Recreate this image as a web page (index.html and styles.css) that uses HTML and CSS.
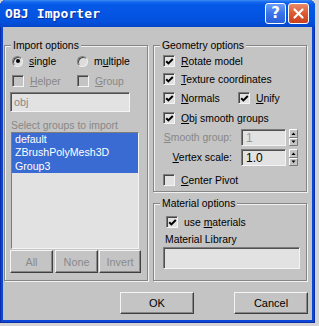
FILE: index.html
```html
<!DOCTYPE html>
<html>
<head>
<meta charset="utf-8">
<link rel="stylesheet" href="styles.css">
</head>
<body>
<div class="window">
  <div class="titlebar">
    <span class="title">OBJ Importer</span>
    <div class="tbtns">
      <span class="tb help">?</span>
      <span class="tb close"><svg width="13" height="13" viewBox="0 0 13 13"><path d="M2.5 2.5L10.5 10.5M10.5 2.5L2.5 10.5" stroke="#fff" stroke-width="2.2" stroke-linecap="round"/></svg></span>
    </div>
  </div>
  <div class="client">
    <div class="groups">
      <fieldset class="grp import">
        <legend>Import options</legend>
        <div class="pair radios">
          <label class="opt"><span class="radio on"></span><span><u>s</u>ingle</span></label>
          <label class="opt"><span class="radio"></span><span>m<u>u</u>ltiple</span></label>
        </div>
        <div class="pair checks dis">
          <label class="opt"><span class="cb"></span><span><u>H</u>elper</span></label>
          <label class="opt"><span class="cb"></span><span><u>G</u>roup</span></label>
        </div>
        <div class="field objfield">obj</div>
        <div class="hint">Select groups to import</div>
        <div class="list">
          <div class="item sel">default</div>
          <div class="item sel">ZBrushPolyMesh3D</div>
          <div class="item sel">Group3</div>
        </div>
        <div class="btnrow">
          <span class="btn dis b-all">All</span>
          <span class="btn dis b-none">None</span>
          <span class="btn dis b-inv">Invert</span>
        </div>
      </fieldset>
      <div class="rightcol">
        <fieldset class="grp geom">
          <legend>Geometry options</legend>
          <label class="opt r1"><span class="cb on"><svg width="9" height="9" viewBox="0 0 9 9"><path d="M1.2 4.2L3.4 6.4L7.8 2" stroke="#000" stroke-width="2" fill="none"/></svg></span><span><u>R</u>otate model</span></label>
          <label class="opt r2"><span class="cb on"><svg width="9" height="9" viewBox="0 0 9 9"><path d="M1.2 4.2L3.4 6.4L7.8 2" stroke="#000" stroke-width="2" fill="none"/></svg></span><span><u>T</u>exture coordinates</span></label>
          <div class="pair2 r3">
            <label class="opt"><span class="cb on"><svg width="9" height="9" viewBox="0 0 9 9"><path d="M1.2 4.2L3.4 6.4L7.8 2" stroke="#000" stroke-width="2" fill="none"/></svg></span><span><u>N</u>ormals</span></label>
            <label class="opt"><span class="cb on"><svg width="9" height="9" viewBox="0 0 9 9"><path d="M1.2 4.2L3.4 6.4L7.8 2" stroke="#000" stroke-width="2" fill="none"/></svg></span><span><u>U</u>nify</span></label>
          </div>
          <label class="opt r4"><span class="cb on"><svg width="9" height="9" viewBox="0 0 9 9"><path d="M1.2 4.2L3.4 6.4L7.8 2" stroke="#000" stroke-width="2" fill="none"/></svg></span><span><u>O</u>bj smooth groups</span></label>
          <div class="spinrow s1 dis">
            <span class="slabel"><u>S</u>mooth group:</span>
            <span class="field num">1</span>
            <svg class="spin" width="9" height="17" viewBox="0 0 9 17"><rect x="0" y="0" width="9" height="17" fill="#c4c4c4"/><path d="M0.5 8V0.5H8.5" stroke="#fff" fill="none"/><path d="M0.5 8.5H8.5V0.5" stroke="#7a7a7a" fill="none"/><path d="M0.5 16V9.5H8.5" stroke="#fff" fill="none"/><path d="M0.5 16.5H8.5V9.5" stroke="#7a7a7a" fill="none"/><path d="M2.5 6H6.5L4.5 3.5Z" fill="#000"/><path d="M2.5 11.5H6.5L4.5 14Z" fill="#000"/></svg>
          </div>
          <div class="spinrow s2">
            <span class="slabel"><u>V</u>ertex scale:</span>
            <span class="field num">1.0</span>
            <svg class="spin" width="9" height="17" viewBox="0 0 9 17"><rect x="0" y="0" width="9" height="17" fill="#c4c4c4"/><path d="M0.5 8V0.5H8.5" stroke="#fff" fill="none"/><path d="M0.5 8.5H8.5V0.5" stroke="#7a7a7a" fill="none"/><path d="M0.5 16V9.5H8.5" stroke="#fff" fill="none"/><path d="M0.5 16.5H8.5V9.5" stroke="#7a7a7a" fill="none"/><path d="M2.5 6H6.5L4.5 3.5Z" fill="#000"/><path d="M2.5 11.5H6.5L4.5 14Z" fill="#000"/></svg>
          </div>
          <label class="opt r5"><span class="cb"></span><span><u>C</u>enter Pivot</span></label>
        </fieldset>
        <fieldset class="grp mat">
          <legend>Material options</legend>
          <label class="opt m1"><span class="cb on"><svg width="9" height="9" viewBox="0 0 9 9"><path d="M1.2 4.2L3.4 6.4L7.8 2" stroke="#000" stroke-width="2" fill="none"/></svg></span><span>use <u>m</u>aterials</span></label>
          <div class="mlabel">Material Library</div>
          <div class="field libfield"></div>
        </fieldset>
      </div>
    </div>
    <div class="footer">
      <span class="btn big">OK</span>
      <span class="btn big">Cancel</span>
    </div>
  </div>
</div>
</body>
</html>
```

FILE: styles.css
```css
* { box-sizing: border-box; }

body {
  margin: 0;
  background: #d4d4d4;
  font-family: "Liberation Sans", Arial, sans-serif;
  font-size: 10.4px;
  color: #000;
}

.window {
  width: 315px;
  height: 323px;
  display: flex;
  flex-direction: column;
  background: #0b46d6;
  box-shadow: inset 1px 0 #0a2fa8, inset -1px 0 #0a2fa8, inset 0 -1px #0a2fa8;
  border-radius: 6px 6px 0 0;
}

.titlebar {
  height: 27px;
  flex: none;
  display: flex;
  align-items: center;
  justify-content: space-between;
  padding: 0 6px 0 5px;
  border-radius: 6px 6px 0 0;
  background: linear-gradient(to bottom, #3f8cf5 0, #1468ee 2px, #0558e6 5px, #0454e2 16px, #0350dc 22px, #0345c9 27px);
}

.title {
  font-family: "DejaVu Sans Mono", "Liberation Mono", monospace;
  font-weight: bold;
  font-size: 13px;
  color: #fff;
  letter-spacing: 0.1px;
  text-shadow: 1px 1px #0a2f9a;
  margin-top: -1px;
}

.tbtns {
  display: flex;
  gap: 2px;
  margin-top: -1px;
}

.tb {
  width: 21px;
  height: 21px;
  border: 1px solid #fff;
  border-radius: 3px;
  display: flex;
  align-items: center;
  justify-content: center;
}

.help {
  background: linear-gradient(to bottom, #6a9cf6, #3a73e8 50%, #2b60d8);
  color: #fff;
  font-family: "DejaVu Sans", sans-serif;
  font-weight: bold;
  font-size: 15px;
}

.close {
  background: linear-gradient(to bottom, #ea8a68, #dc5a33 50%, #c9401c);
}

.client {
  flex: 1;
  margin: 0 3px 3px;
  background: #c4c4c4;
  padding: 12px 0 0 1px;
}

.groups {
  display: grid;
  grid-template-columns: 144px 154px;
  column-gap: 5px;
}

.rightcol {
  display: flex;
  flex-direction: column;
  gap: 5px;
}

.grp {
  margin: 0;
  border: 1px solid #858585;
  box-shadow: inset 1px 1px #f2f2f2, 1px 1px #f2f2f2;
  padding: 0 0 0 6px;
  min-width: 0;
}

.grp legend {
  padding: 0 2px;
  line-height: 13px;
  background: #c4c4c4;
}

.import { height: 242px; padding-bottom: 7px; }
.geom { height: 153px; }
.mat { height: 84px; }

.opt {
  display: flex;
  align-items: center;
  gap: 6px;
  white-space: nowrap;
}

.dis { color: #878787; }

.pair {
  display: grid;
  grid-template-columns: 65px auto;
  margin-left: 1px;
  height: 14px;
}

.radios { margin-top: 2px; }
.checks { margin-top: 6px; }

.radio {
  width: 11px;
  height: 11px;
  border-radius: 50%;
  border: 1px solid;
  border-color: #7c7c7c #f0f0f0 #f0f0f0 #7c7c7c;
  background: #dcdcdc;
  box-shadow: inset 1px 1px #4a4a4a;
  display: flex;
  align-items: center;
  justify-content: center;
  flex: none;
}

.radio.on::after {
  content: "";
  width: 4px;
  height: 4px;
  border-radius: 50%;
  background: #000;
}

.cb {
  width: 12px;
  height: 12px;
  flex: none;
  border: 1px solid;
  border-color: #7c7c7c #f4f4f4 #f4f4f4 #7c7c7c;
  box-shadow: inset 1px 1px #454545;
  background: #e2e2e2;
  display: flex;
  align-items: center;
  justify-content: center;
  padding: 1px 0 0 1px;
}

.dis .cb { background: #c4c4c4; }

.field {
  border: 1px solid;
  border-color: #7c7c7c #f4f4f4 #f4f4f4 #7c7c7c;
  box-shadow: inset 1px 1px #505050;
  background: #e2e2e2;
}

.objfield {
  width: 120px;
  height: 20px;
  margin: 4px 0 0 -1px;
  color: #888;
  padding: 3px 0 0 3px;
  font-size: 10.8px;
}

.hint {
  margin-top: 7px;
  line-height: 13px;
  color: #888;
}

.list {
  width: 128px;
  height: 117px;
  border: 1px solid;
  border-color: #7c7c7c #f4f4f4 #f4f4f4 #7c7c7c;
  background: #e2e2e2;
  padding-top: 0;
}

.item {
  height: 13.3px;
  line-height: 13px;
  padding-left: 3px;
  font-size: 10.6px;
}

.item.sel {
  background: #3a6bd2;
  color: #fff;
}

.btnrow {
  display: flex;
  gap: 1px;
  margin: 1px 0 0 -1px;
}

.btn {
  display: flex;
  align-items: center;
  justify-content: center;
  height: 23px;
  border: 1px solid;
  border-color: #f4f4f4 #404040 #404040 #f4f4f4;
  box-shadow: inset -1px -1px #888;
  background: #c4c4c4;
}

.btn.dis { color: #8a8a8a; font-size: 10.8px; }
.b-all { width: 43px; }
.b-none { width: 43px; margin-left: 1px; }
.b-inv { width: 42px; }

.geom .opt { margin-left: 3px; height: 16px; gap: 6px; }
.r1 { margin-top: 1px; }
.r2 { margin-top: 2px; }
.r3 { margin-top: 3px; }
.r4 { margin-top: 4px; }
.r5 { margin-top: 6px; }

.pair2 {
  display: grid;
  grid-template-columns: 78px auto;
}

.pair2 .opt { margin-left: 3px; }
.pair2 .opt + .opt { margin-left: 0; }

.spinrow {
  display: flex;
  align-items: center;
  height: 17px;
  margin-top: 3px;
}

.slabel {
  width: 72px;
  text-align: right;
  margin-right: 9px;
  white-space: nowrap;
}

.num {
  width: 45px;
  height: 17px;
  padding: 1px 0 0 4px;
  font-size: 12px;
  line-height: 14px;
}

.dis .num { color: #999; }

.spin { margin-left: 3px; }

.mat .opt.m1 { margin: 5px 0 0 6px; height: 14px; gap: 6px; }

.mlabel {
  margin: 5px 0 0 5px;
  line-height: 12px;
}

.libfield {
  width: 137px;
  height: 22px;
  margin: 1px 0 0 3px;
}

.footer {
  display: flex;
  justify-content: flex-end;
  gap: 40px;
  margin-top: 11px;
  padding-right: 4px;
}

.btn.big {
  width: 74px;
  height: 22px;
  font-size: 11px;
}
```
